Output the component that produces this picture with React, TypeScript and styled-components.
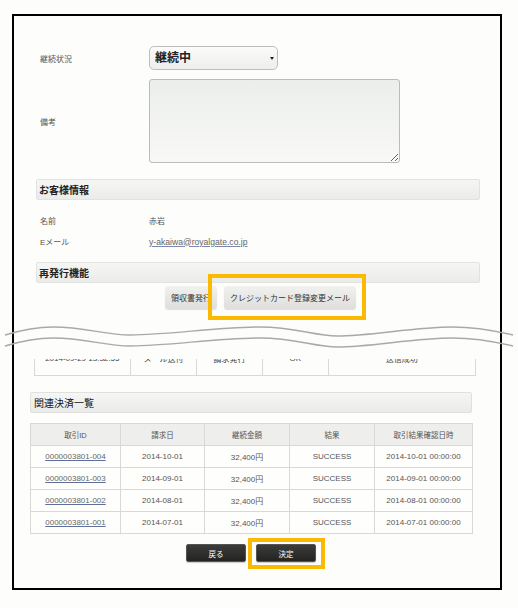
import styled, { createGlobalStyle } from 'styled-components';

const GlobalStyle = createGlobalStyle`
  html, body {
    margin: 0;
    padding: 0;
    background: #fdfdfb;
  }
  body {
    font-family: "Liberation Sans", "Noto Sans CJK JP", sans-serif;
    color: #444;
  }
`;

const jp = `"Liberation Sans", "Noto Sans CJK JP", sans-serif`;

interface Payment {
  id: string;
  billed: string;
  amount: string;
  result: string;
  confirmed: string;
}

const payments: Payment[] = [
  { id: '0000003801-004', billed: '2014-10-01', amount: '32,400円', result: 'SUCCESS', confirmed: '2014-10-01 00:00:00' },
  { id: '0000003801-003', billed: '2014-09-01', amount: '32,400円', result: 'SUCCESS', confirmed: '2014-09-01 00:00:00' },
  { id: '0000003801-002', billed: '2014-08-01', amount: '32,400円', result: 'SUCCESS', confirmed: '2014-08-01 00:00:00' },
  { id: '0000003801-001', billed: '2014-07-01', amount: '32,400円', result: 'SUCCESS', confirmed: '2014-07-01 00:00:00' },
];

const App = () => {
  return (
    <>
      <GlobalStyle />
      <Frame>
        <TopSection>
          <FormRow>
            <Label>継続状況</Label>
            <SelectWrap>
              <Select defaultValue="継続中">
                <option>継続中</option>
                <option>停止</option>
              </Select>
            </SelectWrap>
          </FormRow>
          <FormRow $gap={9}>
            <Label>備考</Label>
            <TextArea />
          </FormRow>

          <SectionHeader $top={16}>お客様情報</SectionHeader>
          <InfoList>
            <InfoRow>
              <Label>名前</Label>
              <Value>赤岩</Value>
            </InfoRow>
            <InfoRow>
              <Label>Eメール</Label>
              <MailLink href="#">y-akaiwa@royalgate.co.jp</MailLink>
            </InfoRow>
          </InfoList>

          <SectionHeader $top={10}>再発行機能</SectionHeader>
          <ButtonRow>
            <GrayButton>領収書発行</GrayButton>
            <Highlight $t={-12} $r={-10} $b={-11} $l={-16}>
              <GrayButton>クレジットカード登録変更メール</GrayButton>
            </Highlight>
          </ButtonRow>
        </TopSection>

        <WaveBreak>
          <svg width="518" height="34" viewBox="0 320 518 34">
            <path
              d="M5 336 C 25 330, 40 328, 53 328 C 85 328, 105 336, 130 336 C 170 336, 215 328, 260 328 C 295 328, 315 337, 337 337 C 370 337, 415 328, 452 328 C 480 328, 500 333, 513 336"
              fill="none"
              stroke="#a9a9a9"
              strokeWidth="1.4"
            />
            <path
              d="M5 347 C 25 341, 40 339, 53 339 C 85 339, 105 347, 130 347 C 170 347, 215 339, 260 339 C 295 339, 315 348, 337 348 C 370 348, 415 339, 452 339 C 480 339, 500 344, 513 347"
              fill="none"
              stroke="#a9a9a9"
              strokeWidth="1.4"
            />
          </svg>
        </WaveBreak>

        <ClippedRow>
          <HistoryRow>
            <HistoryCell $w={96}>2014-09-29 13:32:55</HistoryCell>
            <HistoryCell $w={67}>メール送付</HistoryCell>
            <HistoryCell $w={66}>請求発行</HistoryCell>
            <HistoryCell $w={66}>OK</HistoryCell>
            <HistoryCell $w={147}>送信成功</HistoryCell>
          </HistoryRow>
        </ClippedRow>

        <BottomSection>
          <ListHeader>関連決済一覧</ListHeader>
          <PaymentTable>
            <colgroup>
              <col style={{ width: 90 }} />
              <col style={{ width: 84 }} />
              <col style={{ width: 85 }} />
              <col style={{ width: 85 }} />
              <col style={{ width: 98 }} />
            </colgroup>
            <thead>
              <tr>
                <Th>取引ID</Th>
                <Th>請求日</Th>
                <Th>継続金額</Th>
                <Th>結果</Th>
                <Th>取引結果確認日時</Th>
              </tr>
            </thead>
            <tbody>
              {payments.map((p) => (
                <tr key={p.id}>
                  <Td>
                    <CellLink href="#">{p.id}</CellLink>
                  </Td>
                  <Td>{p.billed}</Td>
                  <Td>{p.amount}</Td>
                  <Td>{p.result}</Td>
                  <Td>{p.confirmed}</Td>
                </tr>
              ))}
            </tbody>
          </PaymentTable>

          <ActionRow>
            <DarkButton>戻る</DarkButton>
            <Highlight $t={-6} $r={-9} $b={-7} $l={-8}>
              <DarkButton>決定</DarkButton>
            </Highlight>
          </ActionRow>
        </BottomSection>
      </Frame>
    </>
  );
};

const Frame = styled.div`
  box-sizing: border-box;
  margin: 14px 0 0 12px;
  width: 490px;
  height: 576px;
  border: 2px solid #000;
  background: #fdfdfb;
  display: flex;
  flex-direction: column;
`;

const TopSection = styled.div`
  padding: 30px 20px 0 22px;
  display: flex;
  flex-direction: column;
`;

const FormRow = styled.div<{ $gap?: number }>`
  display: flex;
  align-items: center;
  margin-top: ${(p) => p.$gap ?? 0}px;
`;

const Label = styled.div`
  width: 113px;
  padding-left: 4px;
  box-sizing: border-box;
  font-family: ${jp};
  font-size: 8px;
  color: #555;
  flex-shrink: 0;
`;

const SelectWrap = styled.div`
  position: relative;
  width: 129px;
  height: 24px;

  &::after {
    content: '';
    position: absolute;
    right: 4px;
    top: 11px;
    border-left: 2px solid transparent;
    border-right: 2px solid transparent;
    border-top: 3px solid #222;
    pointer-events: none;
  }
`;

const Select = styled.select`
  appearance: none;
  box-sizing: border-box;
  width: 100%;
  height: 100%;
  border: 1px solid #bdbdbb;
  border-radius: 5px;
  background: linear-gradient(#fbfbfa, #eeeeec);
  font-family: ${jp};
  font-size: 12px;
  font-weight: bold;
  color: #222;
  padding: 0 0 0 5px;
  outline: none;
`;

const TextArea = styled.textarea`
  box-sizing: border-box;
  width: 251px;
  height: 84px;
  border: 1px solid #bbbbb9;
  border-radius: 3px;
  background: linear-gradient(#eceeeb, #f8f9f7);
  outline: none;
  margin: 0;
`;

const SectionHeader = styled.div<{ $top: number }>`
  margin-top: ${(p) => p.$top}px;
  box-sizing: border-box;
  height: 21px;
  display: flex;
  align-items: center;
  padding-left: 2px;
  border: 1px solid #e2e2e0;
  border-radius: 2px;
  background: linear-gradient(#f6f6f4, #ebebe9);
  font-family: ${jp};
  font-size: 10px;
  font-weight: bold;
  color: #222;
`;

const InfoList = styled.div`
  padding-top: 10px;
  display: flex;
  flex-direction: column;
`;

const InfoRow = styled.div`
  display: flex;
  align-items: center;
  height: 21px;
`;

const Value = styled.div`
  font-family: ${jp};
  font-size: 8px;
  color: #555;
`;

const MailLink = styled.a`
  font-family: ${jp};
  font-size: 8.6px;
  color: #666;
  text-decoration: underline;
  text-decoration-color: #7a88b0;
`;

const ButtonRow = styled.div`
  margin-top: 3px;
  display: flex;
  justify-content: center;
  gap: 7px;
  padding-left: 5px;
`;

const GrayButton = styled.button`
  height: 23px;
  padding: 0 6px;
  border: none;
  border-radius: 3px;
  background: linear-gradient(#f1f1ef, #dededc);
  box-shadow: 0 1px 1px rgba(0, 0, 0, 0.12);
  font-family: ${jp};
  font-size: 8px;
  color: #333;
  white-space: nowrap;
  cursor: pointer;
`;

const Highlight = styled.span<{ $t: number; $r: number; $b: number; $l: number }>`
  position: relative;
  display: inline-flex;

  &::after {
    content: '';
    position: absolute;
    top: ${(p) => p.$t}px;
    right: ${(p) => p.$r}px;
    bottom: ${(p) => p.$b}px;
    left: ${(p) => p.$l}px;
    border: 4px solid #fbb900;
    pointer-events: none;
  }
`;

const WaveBreak = styled.div`
  height: 50px;
  flex-shrink: 0;
  margin-left: -14px;
  padding-top: 10px;
  box-sizing: border-box;
  position: relative;
  z-index: 1;

  svg {
    display: block;
  }
`;

const ClippedRow = styled.div`
  height: 16px;
  flex-shrink: 0;
  margin: 0 24px 0 20px;
  overflow: hidden;
  display: flex;
  align-items: flex-end;
  border-bottom: 1px solid #d8d8d8;
  border-left: 1px solid #d8d8d8;
  border-right: 1px solid #d8d8d8;
`;

const HistoryRow = styled.div`
  display: flex;
  height: 34px;
  flex-shrink: 0;
  width: 100%;
`;

const HistoryCell = styled.div<{ $w: number }>`
  width: ${(p) => p.$w}px;
  box-sizing: border-box;
  display: flex;
  align-items: center;
  justify-content: center;
  font-family: ${jp};
  font-size: 8px;
  color: #444;
  border-right: 1px solid #d8d8d8;

  &:last-child {
    border-right: none;
  }
`;

const BottomSection = styled.div`
  padding: 16px 28px 0 16px;
  display: flex;
  flex-direction: column;
`;

const ListHeader = styled.div`
  box-sizing: border-box;
  height: 21px;
  display: flex;
  align-items: center;
  padding-left: 3px;
  border: 1px solid #e0e0de;
  border-radius: 2px;
  background: linear-gradient(#f6f6f4, #eaeae8);
  font-family: ${jp};
  font-size: 10px;
  color: #111;
`;

const PaymentTable = styled.table`
  margin-top: 10px;
  width: 442px;
  border-collapse: collapse;
  table-layout: fixed;
`;

const Th = styled.th`
  height: 21px;
  padding: 0;
  border: 1px solid #d8d8d8;
  background: #eeeeec;
  font-family: ${jp};
  font-size: 7.5px;
  font-weight: normal;
  color: #555;
`;

const Td = styled.td`
  height: 21px;
  padding: 0;
  border: 1px solid #d8d8d8;
  text-align: center;
  font-family: ${jp};
  font-size: 8px;
  color: #555;
  background: #fefefd;
`;

const CellLink = styled.a`
  color: #666;
  text-decoration: underline;
  text-decoration-color: #5f6f9c;
`;

const ActionRow = styled.div`
  margin-top: 10px;
  display: flex;
  justify-content: center;
  gap: 10px;
`;

const DarkButton = styled.button`
  width: 60px;
  height: 18px;
  padding: 0;
  border: 1px solid #555;
  border-radius: 2px;
  background: linear-gradient(#3c3d3b, #232422);
  box-shadow: 0 1px 1px rgba(0, 0, 0, 0.2);
  font-family: ${jp};
  font-size: 7.5px;
  color: #fff;
  cursor: pointer;
`;

export default App;
